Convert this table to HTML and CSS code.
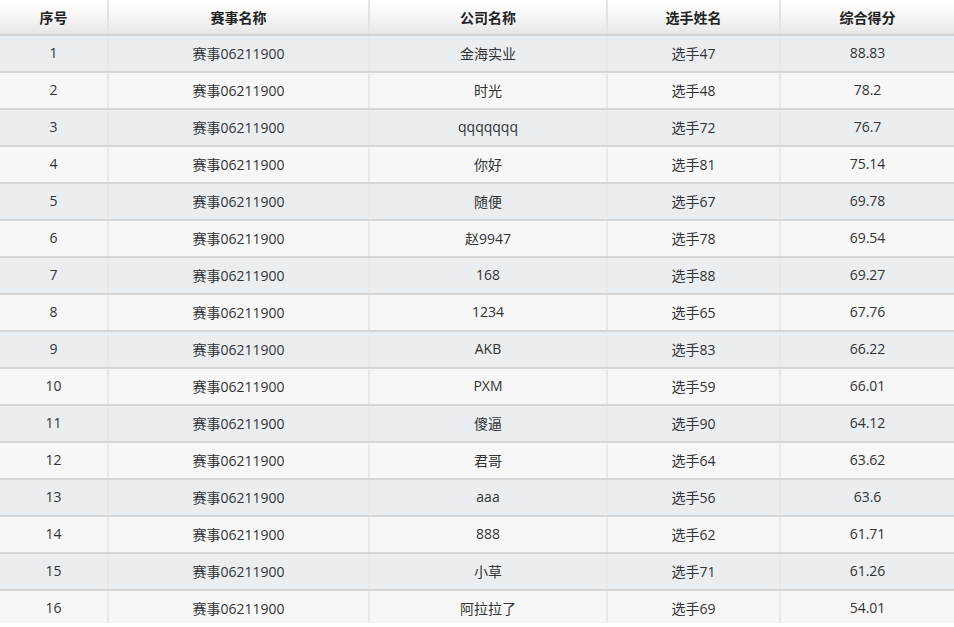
FILE: index.html
```html
<!DOCTYPE html>
<html lang="zh">
<head>
<meta charset="utf-8">
<link rel="stylesheet" href="styles.css">
</head>
<body>
<div class="wrap">
<table class="rank">
  <colgroup>
    <col class="c1"><col class="c2"><col class="c3"><col class="c4"><col class="c5">
  </colgroup>
  <thead>
    <tr><th>序号</th><th>赛事名称</th><th>公司名称</th><th>选手姓名</th><th>综合得分</th></tr>
  </thead>
  <tbody>
    <tr><td>1</td><td>赛事06211900</td><td>金海实业</td><td>选手47</td><td>88.83</td></tr>
    <tr><td>2</td><td>赛事06211900</td><td>时光</td><td>选手48</td><td>78.2</td></tr>
    <tr><td>3</td><td>赛事06211900</td><td>qqqqqqq</td><td>选手72</td><td>76.7</td></tr>
    <tr><td>4</td><td>赛事06211900</td><td>你好</td><td>选手81</td><td>75.14</td></tr>
    <tr><td>5</td><td>赛事06211900</td><td>随便</td><td>选手67</td><td>69.78</td></tr>
    <tr><td>6</td><td>赛事06211900</td><td>赵9947</td><td>选手78</td><td>69.54</td></tr>
    <tr><td>7</td><td>赛事06211900</td><td>168</td><td>选手88</td><td>69.27</td></tr>
    <tr><td>8</td><td>赛事06211900</td><td>1234</td><td>选手65</td><td>67.76</td></tr>
    <tr><td>9</td><td>赛事06211900</td><td>AKB</td><td>选手83</td><td>66.22</td></tr>
    <tr><td>10</td><td>赛事06211900</td><td>PXM</td><td>选手59</td><td>66.01</td></tr>
    <tr><td>11</td><td>赛事06211900</td><td>傻逼</td><td>选手90</td><td>64.12</td></tr>
    <tr><td>12</td><td>赛事06211900</td><td>君哥</td><td>选手64</td><td>63.62</td></tr>
    <tr><td>13</td><td>赛事06211900</td><td>aaa</td><td>选手56</td><td>63.6</td></tr>
    <tr><td>14</td><td>赛事06211900</td><td>888</td><td>选手62</td><td>61.71</td></tr>
    <tr><td>15</td><td>赛事06211900</td><td>小草</td><td>选手71</td><td>61.26</td></tr>
    <tr><td>16</td><td>赛事06211900</td><td>阿拉拉了</td><td>选手69</td><td>54.01</td></tr>
  </tbody>
</table>
</div>
</body>
</html>
```
FILE: styles.css
```css
html, body {
  margin: 0;
  padding: 0;
  background: #ffffff;
}
body {
  font-family: "Open Sans", "Noto Sans CJK SC", sans-serif;
  font-size: 14px;
  color: #333333;
}
.wrap {
  height: 623px;
  overflow: hidden;
}
.rank {
  width: 954px;
  border-collapse: collapse;
  table-layout: fixed;
}
.c1 { width: 108px; }
.c2 { width: 261px; }
.c3 { width: 238px; }
.c4 { width: 173px; }
.c5 { width: 174px; }
.rank th {
  height: 33px;
  padding: 0 0 1px;
  font-weight: bold;
  color: #222222;
  text-align: center;
  background: linear-gradient(to bottom, #ffffff 0%, #f7f7f7 50%, #e6e6e6 100%);
  border-left: 2px solid #e4e4e4;
  border-bottom: 2px solid #d2d2d2;
}
.rank td {
  height: 33px;
  padding: 0 0 2px;
  text-align: center;
  border-left: 2px solid #e9e9e9;
  border-bottom: 2px solid #d6d6d6;
}
.rank th:first-child, .rank td:first-child {
  border-left: none;
}
.rank tbody tr:nth-child(odd) td {
  background: #eaeef1;
}
.rank tbody tr:nth-child(even) td {
  background: #f7f7f7;
}
.rank tbody tr:last-child td {
  border-bottom: none;
}
```
